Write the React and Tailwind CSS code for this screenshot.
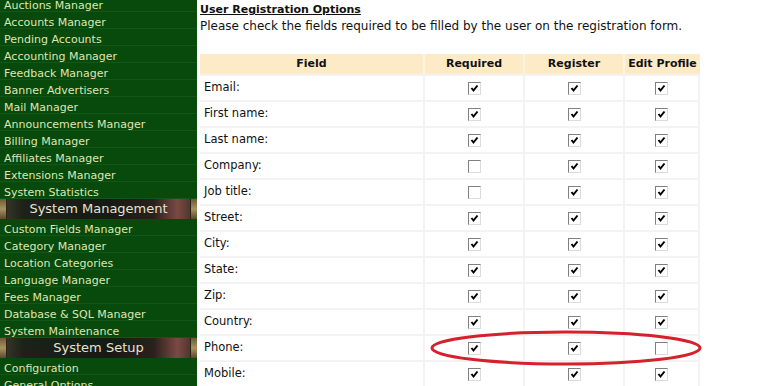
import React from 'react';

const groupA = [
    'Auctions Manager',
    'Accounts Manager',
    'Pending Accounts',
    'Accounting Manager',
    'Feedback Manager',
    'Banner Advertisers',
    'Mail Manager',
    'Announcements Manager',
    'Billing Manager',
    'Affiliates Manager',
    'Extensions Manager',
    'System Statistics',
];

const groupB = [
    'Custom Fields Manager',
    'Category Manager',
    'Location Categories',
    'Language Manager',
    'Fees Manager',
    'Database & SQL Manager',
    'System Maintenance',
];

const groupC = ['Configuration', 'General Options'];

// [field, required, register, editProfile]
const fields = [
    ['Email:', true, true, true],
    ['First name:', true, true, true],
    ['Last name:', true, true, true],
    ['Company:', false, true, true],
    ['Job title:', false, true, true],
    ['Street:', true, true, true],
    ['City:', true, true, true],
    ['State:', true, true, true],
    ['Zip:', true, true, true],
    ['Country:', true, true, true],
    ['Phone:', true, true, false],
    ['Mobile:', true, true, true],
];

const MenuItem = ({ label }) => (
    <div className="h-[17px] shrink-0 pt-[4px] leading-[13px] pl-[4px] border-b border-[#13561a] text-[#dfe5b4] whitespace-nowrap">
        {label}
    </div>
);

const SectionBar = ({ title }) => (
    <div className="h-[20px] shrink-0 flex items-stretch bg-[linear-gradient(90deg,#3b3d2a_0%,#1d2119_12%,#161a14_55%,#2a201c_78%,#7a4a44_90%,#3a2c22_100%)]">
        <div className="w-[7px] bg-[linear-gradient(180deg,#6b5a38,#a8925e_50%,#5a4a2e)] border-r border-[#2a2418]" />
        <div className="flex-1 flex items-center justify-center text-[13px] text-[#e4e4d2]">{title}</div>
        <div className="w-[7px] bg-[linear-gradient(180deg,#6b5a38,#a8925e_50%,#5a4a2e)] border-l border-[#2a2418]" />
    </div>
);

const Check = ({ on }) => (
    <span className="inline-block w-[13px] h-[13px] bg-white border border-t-[#808080] border-l-[#808080] border-b-[#dcdcdc] border-r-[#dcdcdc] relative">
        {on && (
            <svg width="11" height="11" viewBox="0 0 11 11" className="absolute left-0 top-0">
                <path d="M2.5 5 L4.5 7.5 L8.5 2.5" fill="none" stroke="#000" strokeWidth="2" />
            </svg>
        )}
    </span>
);

export default function App() {
    return (
        <div
            className="relative w-[778px] h-[386px] overflow-hidden flex bg-white text-[11px] text-[#111]"
            style={{ fontFamily: '"DejaVu Sans", Verdana, sans-serif' }}
        >
            {/* left menu */}
            <div className="w-[197px] shrink-0 h-full overflow-hidden bg-[#084a0c]">
                <div className="-mt-[5px] flex flex-col">
                    {groupA.map((l) => <MenuItem key={l} label={l} />)}
                    <SectionBar title="System Management" />
                    {groupB.map((l) => <MenuItem key={l} label={l} />)}
                    <SectionBar title="System Setup" />
                    {groupC.map((l) => <MenuItem key={l} label={l} />)}
                </div>
            </div>

            {/* main content */}
            <div className="ml-[3px] flex-1 pt-[2px]">
                <div className="font-bold underline leading-[16px] text-[#111]">User Registration Options</div>
                <div className="leading-[17px] text-[12px]">
                    Please check the fields required to be filled by the user on the registration form.
                </div>

                <div className="mt-[19px] w-[500px]">
                    <div className="flex h-[22px] bg-[#fdebc8] border-b-2 border-[#f3f3f3] font-bold">
                        <div className="w-[225px] flex items-center justify-center border-r-2 border-[#fdf3e0]">Field</div>
                        <div className="w-[100px] flex items-center justify-center border-r-2 border-[#fdf3e0]">Required</div>
                        <div className="w-[100px] flex items-center justify-center border-r-2 border-[#fdf3e0]">Register</div>
                        <div className="flex-1 flex items-center justify-center">Edit Profile</div>
                    </div>
                    {fields.map(([name, req, reg, edit]) => (
                        <div key={name} className="flex h-[26px] border-b-2 border-[#f3f3f3]">
                            <div className="w-[225px] flex items-center pl-[4px] text-[11.5px] border-r-2 border-[#f3f3f3]">{name}</div>
                            <div className="w-[100px] flex items-center justify-center border-r-2 border-[#f3f3f3]"><Check on={req} /></div>
                            <div className="w-[100px] flex items-center justify-center border-r-2 border-[#f3f3f3]"><Check on={reg} /></div>
                            <div className="flex-1 flex items-center justify-center border-r-2 border-[#f3f3f3]"><Check on={edit} /></div>
                        </div>
                    ))}
                </div>
            </div>

            {/* hand-drawn red highlight around the Phone row */}
            <svg className="absolute left-[428px] top-[329px]" width="278" height="40" viewBox="0 0 278 40">
                <ellipse cx="138" cy="19" rx="134" ry="16" fill="none" stroke="#d6202c" strokeWidth="3" />
            </svg>
        </div>
    );
}
